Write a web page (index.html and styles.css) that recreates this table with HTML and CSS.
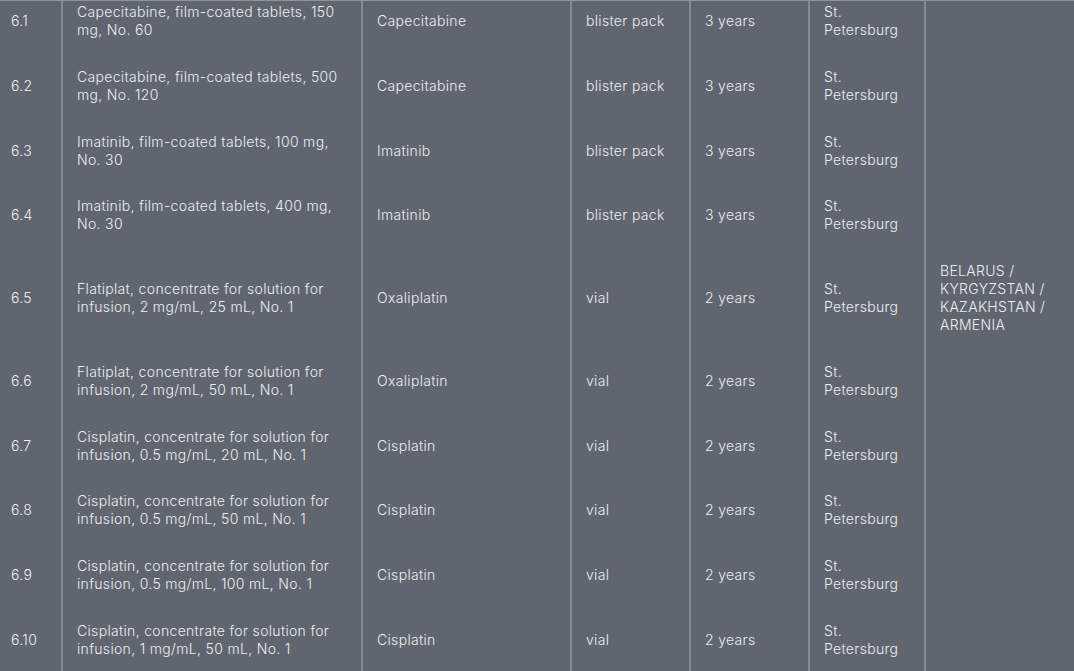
FILE: index.html
```html
<!DOCTYPE html>
<html lang="en">
<head>
<meta charset="utf-8">
<title>Registered products</title>
<link rel="stylesheet" href="styles.css">
</head>
<body>
<div class="frame">
<table class="products">
  <colgroup>
    <col class="c-num">
    <col class="c-name">
    <col class="c-inn">
    <col class="c-pack">
    <col class="c-life">
    <col class="c-site">
    <col class="c-country">
  </colgroup>
  <tbody>
    <tr><td>6.1</td><td>Capecitabine, film-coated tablets, 150 mg, No. 60</td><td>Capecitabine</td><td>blister pack</td><td>3 years</td><td>St. Petersburg</td><td></td></tr>
    <tr><td>6.2</td><td>Capecitabine, film-coated tablets, 500 mg, No. 120</td><td>Capecitabine</td><td>blister pack</td><td>3 years</td><td>St. Petersburg</td><td></td></tr>
    <tr><td>6.3</td><td>Imatinib, film-coated tablets, 100 mg, No. 30</td><td>Imatinib</td><td>blister pack</td><td>3 years</td><td>St. Petersburg</td><td></td></tr>
    <tr><td>6.4</td><td>Imatinib, film-coated tablets, 400 mg, No. 30</td><td>Imatinib</td><td>blister pack</td><td>3 years</td><td>St. Petersburg</td><td></td></tr>
    <tr><td>6.5</td><td>Flatiplat, concentrate for solution for infusion, 2 mg/mL, 25 mL, No. 1</td><td>Oxaliplatin</td><td>vial</td><td>2 years</td><td>St. Petersburg</td><td>BELARUS / KYRGYZSTAN / KAZAKHSTAN / ARMENIA</td></tr>
    <tr><td>6.6</td><td>Flatiplat, concentrate for solution for infusion, 2 mg/mL, 50 mL, No. 1</td><td>Oxaliplatin</td><td>vial</td><td>2 years</td><td>St. Petersburg</td><td></td></tr>
    <tr><td>6.7</td><td>Cisplatin, concentrate for solution for infusion, 0.5 mg/mL, 20 mL, No. 1</td><td>Cisplatin</td><td>vial</td><td>2 years</td><td>St. Petersburg</td><td></td></tr>
    <tr><td>6.8</td><td>Cisplatin, concentrate for solution for infusion, 0.5 mg/mL, 50 mL, No. 1</td><td>Cisplatin</td><td>vial</td><td>2 years</td><td>St. Petersburg</td><td></td></tr>
    <tr><td>6.9</td><td>Cisplatin, concentrate for solution for infusion, 0.5 mg/mL, 100 mL, No. 1</td><td>Cisplatin</td><td>vial</td><td>2 years</td><td>St. Petersburg</td><td></td></tr>
    <tr><td>6.10</td><td>Cisplatin, concentrate for solution for infusion, 1 mg/mL, 50 mL, No. 1</td><td>Cisplatin</td><td>vial</td><td>2 years</td><td>St. Petersburg</td><td></td></tr>
  </tbody>
</table>
</div>
</body>
</html>
```

FILE: styles.css
```css
html, body {
  margin: 0;
  padding: 0;
  background: #5f6670;
}

.frame {
  height: 671px;
  overflow: hidden;
  border-top: 1px solid #8d939b;
  box-sizing: border-box;
  background: #5f6670;
}

.products {
  width: 1074px;
  margin-top: -12px;
  table-layout: fixed;
  border-collapse: separate;
  border-spacing: 0;
  font-family: "Inter", "Liberation Sans", sans-serif;
  font-size: 14px;
  font-weight: 300;
  letter-spacing: 0.32px;
  line-height: 18px;
  color: #eceef0;
}

.c-num { width: 61px; }
.c-name { width: 300px; }
.c-inn { width: 209px; }
.c-pack { width: 119px; }
.c-life { width: 119px; }
.c-site { width: 116px; }
.c-country { width: 150px; }

.products td {
  vertical-align: middle;
  padding: 14px 14px 14.75px 14px;
  border-left: 2px solid #858b94;
  text-align: left;
}

.products td:first-child {
  border-left: none;
  padding-left: 11px;
  padding-right: 6px;
}
```
